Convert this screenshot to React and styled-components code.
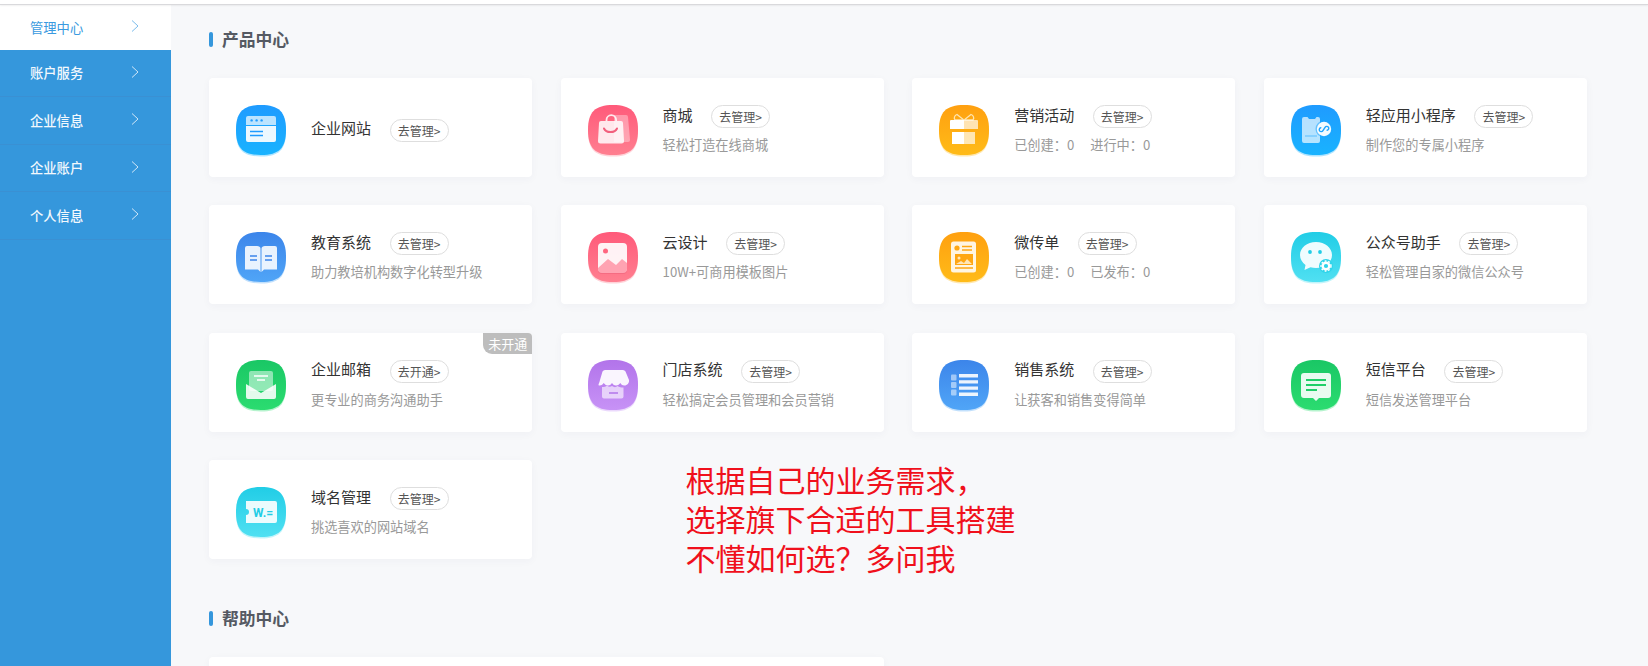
import React from 'react';
import styled, { createGlobalStyle } from 'styled-components';

const GlobalStyle = createGlobalStyle`
    html, body {
        margin: 0;
        height: 666px;
        overflow: hidden;
        background: #f7f8fa;
        font-family: "Noto Sans CJK SC", "Liberation Sans", sans-serif;
    }
`;

const TopBar = styled.div`
    height: 4px;
    background: #fff;
    border-bottom: 1px solid #d9d9dc;
    box-shadow: 0 1px 2px rgba(0, 0, 0, .06);
    position: relative;
`;

const Page = styled.div`
    display: flex;
    height: 661px;
    overflow: hidden;
`;

const Sidebar = styled.nav`
    flex: 0 0 171px;
    background: #3597dc;
`;

const NavItem = styled.div`
    height: ${p => (p.$active ? '44.5px' : '47.5px')};
    box-sizing: border-box;
    padding: 0 32px 0 30px;
    display: flex;
    align-items: center;
    justify-content: space-between;
    font-size: 13.3px;
    font-weight: ${p => (p.$active ? 400 : 500)};
    color: ${p => (p.$active ? '#3a9ae0' : '#f2f8fd')};
    background: ${p => (p.$active ? '#fff' : 'transparent')};
    border-bottom: ${p => (p.$active ? 'none' : '1px solid #3a90d3')};
`;

const Chevron = styled.svg`
    width: 8px;
    height: 14px;
    margin-top: -2px;
    fill: none;
    stroke: ${p => (p.$active ? '#7cbdec' : '#cfe6f8')};
    stroke-width: 1;
`;

const Main = styled.main`
    flex: 1;
    padding: 27px 61px 0 38px;
`;

const Heading = styled.h2`
    margin: 0;
    height: 15px;
    display: flex;
    align-items: center;
    gap: 9px;
    font-size: 16.8px;
    font-weight: 700;
    color: #555a63;
    &::before {
        content: "";
        width: 4px;
        height: 15px;
        border-radius: 2px;
        background: #3597dc;
    }
`;

const HeadingText = styled.span`
    margin-top: -1px;
`;

const Grid = styled.section`
    display: grid;
    grid-template-columns: repeat(4, 1fr);
    grid-auto-rows: 99px;
    gap: 28.4px 28.33px;
    margin: 31px 0 52px;
`;

const Card = styled.article`
    position: relative;
    display: flex;
    align-items: center;
    box-sizing: border-box;
    padding: 27px 27px 22px;
    background: #fff;
    border-radius: 4px;
    box-shadow: 0 2px 8px rgba(40, 60, 90, .04);
    grid-column: ${p => (p.$wide ? 'span 2' : 'auto')};
`;

const IconBox = styled.svg`
    flex: 0 0 50px;
    width: 50px;
    height: 50px;
    margin-right: 25px;
    overflow: visible;
`;

const Info = styled.div`
    display: flex;
    flex-direction: column;
    gap: 9px;
`;

const TitleRow = styled.div`
    display: flex;
    align-items: center;
    gap: 18.5px;
`;

const Title = styled.span`
    font-size: 15px;
    line-height: 23px;
    margin-top: -5px;
    color: #333;
`;

const Pill = styled.span`
    width: 59px;
    height: 23px;
    box-sizing: border-box;
    border: 1px solid #dedede;
    border-radius: 12px;
    background: #fff;
    display: flex;
    align-items: center;
    justify-content: center;
    font-size: 12px;
    color: #555;
`;

const Desc = styled.div`
    display: flex;
    gap: 16px;
    margin-bottom: 2px;
    font-size: 13.2px;
    line-height: 16px;
    color: #999;
`;

const Badge = styled.span`
    position: absolute;
    top: 0;
    right: 0;
    width: 49px;
    height: 21px;
    display: flex;
    align-items: center;
    justify-content: center;
    background: #bdbdbd;
    border-radius: 0 4px 0 9px;
    font-size: 13px;
    color: #fff;
`;

const Note = styled.div`
    grid-column: 2 / span 3;
    padding-left: 125px;
    font-size: 30px;
    color: #f0101c;
`;

const NoteLine = styled.div`
    height: 39px;
    line-height: 39px;
    white-space: nowrap;
`;

const SQUIRCLE = 'M25 0C43 0 50 7 50 25C50 43 43 50 25 50C7 50 0 43 0 25C0 7 7 0 25 0Z';

const Icon = ({ id, from, to, children }) => (
    <IconBox viewBox="0 0 50 50">
        <defs>
            <linearGradient id={id} x1="0" y1="0" x2="0" y2="1">
                <stop offset="0" stopColor={from} />
                <stop offset="1" stopColor={to} />
            </linearGradient>
        </defs>
        <path d={SQUIRCLE} fill={to} opacity=".35" transform="translate(0 1.5)" />
        <path d={SQUIRCLE} fill={`url(#${id})`} />
        {children}
    </IconBox>
);

const BLUE = ['#1f9bff', '#19b3ff'];
const PINK = ['#ff5a7a', '#ff7f90'];
const ORANGE = ['#ffa010', '#ffbb18'];
const ROYAL = ['#3c85ea', '#50a5f7'];
const CYAN = ['#21cde6', '#50e0f2'];
const GREEN = ['#1ac765', '#2bdc70'];
const PURPLE = ['#b274ea', '#c792f6'];

const glyphs = {
    web: (
        <>
            <path d="M12 11h26a2 2 0 0 1 2 2v7H10v-7a2 2 0 0 1 2-2Z" fill="#fff" opacity=".7" />
            <circle cx="15.600" cy="15.400" r="1.200" fill="#1f9bff" />
            <circle cx="20.600" cy="15.400" r="1.200" fill="#1f9bff" />
            <circle cx="25.600" cy="15.400" r="1.200" fill="#1f9bff" />
            <path d="M10 21h30v14a2 2 0 0 1-2 2H12a2 2 0 0 1-2-2Z" fill="#fff" opacity=".92" />
            <path d="M14 26.500h13M14 30.500h13" stroke="#1f9bff" strokeWidth="1.400" />
        </>
    ),
    bag: (
        <>
            <path d="M26 10h12a2 2 0 0 1 2 2l2 23a2 2 0 0 1-2 2h-14Z" fill="#fff" opacity=".35" />
            <path d="M13 16h20a2 2 0 0 1 2 2l1 18a2.500 2.500 0 0 1-2.500 2.500h-21A2.500 2.500 0 0 1 10 36l1-18a2 2 0 0 1 2-2Z" fill="#fff" opacity=".85" />
            <path d="M18.500 16v-1a4.800 4.800 0 0 1 9.600 0v1" fill="none" stroke="#fff" strokeWidth="1.800" opacity=".85" />
            <path d="M16 23.500a6.800 5 0 0 0 13 0" fill="none" stroke="#f2607d" strokeWidth="2" strokeLinecap="round" />
        </>
    ),
    gift: (
        <>
            <path d="M18 9.500 25 15l-9 0c-1.500-2-.5-4.500 2-5.500ZM32 9.500 25 15l9 0c1.500-2 .5-4.500-2-5.500Z" fill="none" stroke="#ffe4b0" strokeWidth="1.300" />
            <path d="M12 15h13v9H11v-8a1 1 0 0 1 1-1ZM13 27h12v12H13Z" fill="#fff" />
            <path d="M25 15h13a1 1 0 0 1 1 1v8H25ZM25 27h11v12H25Z" fill="#fff" opacity=".68" />
        </>
    ),
    app: (
        <>
            <path d="M13 12h3.500l1.500 2h6l1.500-2H27a2 2 0 0 1 2 2v22a2 2 0 0 1-2 2H13a2 2 0 0 1-2-2V14a2 2 0 0 1 2-2Z" fill="#fff" opacity=".68" />
            <rect x="14" y="30" width="12" height="2" fill="#1fa5ff" opacity=".3" />
            <circle cx="33" cy="24" r="8.500" fill="#1fa5ff" opacity=".55" />
            <circle cx="33" cy="24" r="7.200" fill="#fff" opacity=".95" />
            <path d="M29.600 24.600a2 2 0 1 0 3.400 1.400v-4a2 2 0 1 1 3.400 1.400" fill="none" stroke="#1fa5ff" strokeWidth="1.400" strokeLinecap="round" transform="rotate(32 33 24)" />
        </>
    ),
    book: (
        <>
            <path d="M11 14h10c2 0 3.500 1 3.500 2.500V40L22 37.500H9V16a2 2 0 0 1 2-2Z" fill="#fff" opacity=".88" />
            <path d="M39 14H29c-2 0-3.500 1-3.500 2.500V40l2.500-2.500h13V16a2 2 0 0 0-2-2Z" fill="#fff" opacity=".88" />
            <path d="M14 24h7M14 28h7M29 24h7M29 28h7" stroke="#3c85ea" strokeWidth="1.500" />
        </>
    ),
    image: (
        <>
            <rect x="10" y="11" width="29" height="29" rx="4" fill="#d94865" opacity=".25" transform="translate(0 2)" />
            <rect x="10" y="11" width="29" height="29" rx="4" fill="#fff" opacity=".92" />
            <circle cx="17.500" cy="19" r="2.500" fill="#ff6680" />
            <path d="M10 36l10-9 8 6 6-6 5 4v6a4 4 0 0 1-4 4H14a4 4 0 0 1-4-4Z" fill="#ffa3b2" />
        </>
    ),
    flyer: (
        <>
            <rect x="12" y="9.500" width="25" height="31" rx="2.500" fill="#fff" opacity=".88" />
            <circle cx="18" cy="16" r="2.600" fill="#ffa714" />
            <path d="M23 14.500h10M23 18h10M16 36h18" stroke="#ffa714" strokeWidth="1.500" />
            <rect x="16" y="22" width="18" height="11" fill="#ffa714" />
            <circle cx="20" cy="26" r="1.500" fill="#ffe6b8" />
            <path d="M17 32l5-3 3 2 3-4 5 5Z" fill="#ffe6b8" />
        </>
    ),
    wechat: (
        <>
            <path d="M25 10c-9 0-16 5.800-16 13 0 4 2.200 7.500 5.500 10L13.500 38l6-2.800c1.700.5 3.600.8 5.500.8 9 0 16-5.800 16-13s-7-13-16-13Z" fill="#fff" opacity=".92" />
            <circle cx="19" cy="20" r="1.900" fill="#21cde6" />
            <circle cx="29" cy="20" r="1.900" fill="#21cde6" />
            <circle cx="35" cy="34" r="7" fill="#2fd4ea" />
            <circle cx="35" cy="34" r="3.300" fill="none" stroke="#fff" strokeWidth="2.400" />
            <circle cx="35" cy="34" r="5" fill="none" stroke="#fff" strokeWidth="1.400" strokeDasharray="1.800 1.800" />
        </>
    ),
    mail: (
        <>
            <rect x="13" y="11" width="24" height="20" rx="2" fill="#fff" opacity=".5" />
            <path d="M18 16h14M21 20h8" stroke="#fff" strokeWidth="1.400" />
            <path d="M10 24l15 9 15-9v13a2 2 0 0 1-2 2H12a2 2 0 0 1-2-2Z" fill="#fff" opacity=".88" />
        </>
    ),
    store: (
        <>
            <path d="M17 10h18a3 3 0 0 1 2.500 1.500L41 20c.5 3-2 5.500-4.500 5.500s-3.500-1.500-4.200-2.500c-.7 1-2.300 2.500-4.300 2.500s-3.300-1.500-4-2.500c-.7 1-2 2.500-4 2.500s-3.500-1.500-4.300-2.500c-.7 1-2 2.500-4.200 2.500S11.500 23 12 20l2.500-8.500A3 3 0 0 1 17 10Z" fill="#fff" opacity=".92" />
            <path d="M14 27c2 0 4-.5 5-1.500 1.500 1.500 3.500 1.500 5 .5 2 1.500 4 1.500 5.500 0 1.500 1.500 4 1.500 5.500 1.500h.5v9a2 2 0 0 1-2 2H16a2 2 0 0 1-2-2Z" fill="#fff" opacity=".62" />
            <path d="M21 33h9" stroke="#b274ea" strokeWidth="1.500" />
        </>
    ),
    list: (
        <>
            <rect x="12" y="14.500" width="5.500" height="6" rx="1" fill="#fff" opacity=".5" />
            <rect x="12" y="22" width="5.500" height="6" rx="1" fill="#fff" opacity=".5" />
            <rect x="12" y="29.500" width="5.500" height="6" rx="1" fill="#fff" opacity=".5" />
            <path d="M20 15.700h19M20 21.900h19M20 28.100h19M20 34.300h19" stroke="#fff" strokeWidth="3.400" opacity=".9" />
        </>
    ),
    sms: (
        <>
            <path d="M13 13h24a3 3 0 0 1 3 3v19a3 3 0 0 1-3 3H28l-3 3-3-3h-9a3 3 0 0 1-3-3V16a3 3 0 0 1 3-3Z" fill="#fff" opacity=".9" />
            <path d="M15 20h20M15 25h20M15 30h11" stroke="#1fcf68" strokeWidth="1.800" />
        </>
    ),
    domain: (
        <>
            <path d="M10 14h29a2 2 0 0 1 2 2v18a2 2 0 0 1-2 2H10v-8a3 3 0 0 0 0-6Z" fill="#fff" opacity=".9" />
            <text x="27" y="29.500" textAnchor="middle" fontSize="12" fontWeight="700" fontFamily="Roboto, sans-serif" fill="#21cde6">W.=</text>
        </>
    ),
};

const products = [
    { key: 'web', colors: BLUE, title: '企业网站' },
    { key: 'bag', colors: PINK, title: '商城', desc: ['轻松打造在线商城'] },
    { key: 'gift', colors: ORANGE, title: '营销活动', desc: ['已创建：0', '进行中：0'] },
    { key: 'app', colors: BLUE, title: '轻应用小程序', desc: ['制作您的专属小程序'] },
    { key: 'book', colors: ROYAL, title: '教育系统', desc: ['助力教培机构数字化转型升级'] },
    { key: 'image', colors: PINK, title: '云设计', desc: ['10W+可商用模板图片'] },
    { key: 'flyer', colors: ORANGE, title: '微传单', desc: ['已创建：0', '已发布：0'] },
    { key: 'wechat', colors: CYAN, title: '公众号助手', desc: ['轻松管理自家的微信公众号'] },
    { key: 'mail', colors: GREEN, title: '企业邮箱', desc: ['更专业的商务沟通助手'], action: '去开通>', badge: '未开通' },
    { key: 'store', colors: PURPLE, title: '门店系统', desc: ['轻松搞定会员管理和会员营销'] },
    { key: 'list', colors: ROYAL, title: '销售系统', desc: ['让获客和销售变得简单'] },
    { key: 'sms', colors: GREEN, title: '短信平台', desc: ['短信发送管理平台'] },
    { key: 'domain', colors: CYAN, title: '域名管理', desc: ['挑选喜欢的网站域名'] },
];

const menu = ['管理中心', '账户服务', '企业信息', '企业账户', '个人信息'];

const noteLines = ['根据自己的业务需求，', '选择旗下合适的工具搭建', '不懂如何选？多问我'];

export default function App() {
    return (
        <>
            <GlobalStyle />
            <TopBar />
            <Page>
                <Sidebar>
                    {menu.map((name, i) => (
                        <NavItem key={name} $active={i === 0}>
                            {name}
                            <Chevron viewBox="0 0 8 14" $active={i === 0}>
                                <path d="M1 1.500 7 7l-6 5.500" />
                            </Chevron>
                        </NavItem>
                    ))}
                </Sidebar>
                <Main>
                    <Heading><HeadingText>产品中心</HeadingText></Heading>
                    <Grid>
                        {products.map(p => (
                            <Card key={p.key}>
                                <Icon id={`g-${p.key}`} from={p.colors[0]} to={p.colors[1]}>{glyphs[p.key]}</Icon>
                                <Info>
                                    <TitleRow>
                                        <Title>{p.title}</Title>
                                        <Pill>{p.action || '去管理>'}</Pill>
                                    </TitleRow>
                                    {p.desc && <Desc>{p.desc.map(d => <span key={d}>{d}</span>)}</Desc>}
                                </Info>
                                {p.badge && <Badge>{p.badge}</Badge>}
                            </Card>
                        ))}
                        <Note>
                            {noteLines.map(line => <NoteLine key={line}>{line}</NoteLine>)}
                        </Note>
                    </Grid>
                    <Heading><HeadingText>帮助中心</HeadingText></Heading>
                    <Grid>
                        <Card $wide />
                    </Grid>
                </Main>
            </Page>
        </>
    );
}
